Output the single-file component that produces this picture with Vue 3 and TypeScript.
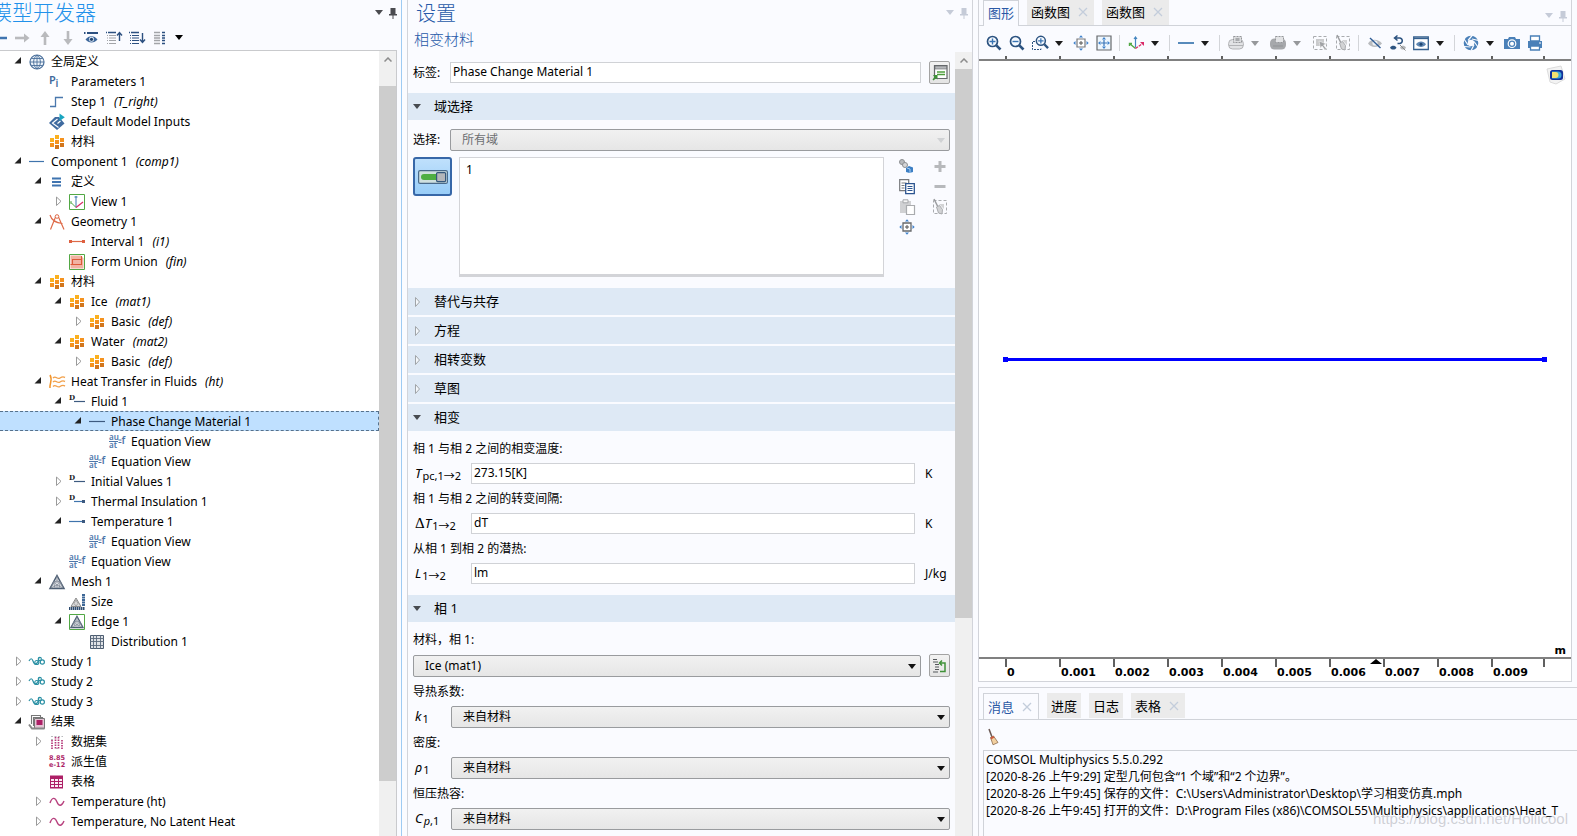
<script setup lang="ts">
import { ref } from 'vue'

interface TreeRow {
  depth: number
  icon: string
  label: string
  tag?: string
  state?: 'open' | 'closed'
}

const equation =
  '<g fill="#4c76aa" font-family="Noto Sans" font-size="8" font-weight="600"><text x="0" y="5.5">au</text><text x="0" y="14">at</text><text x="12.5" y="9.500" font-size="10">f</text></g><path d="M0 7.500h9M9.500 6h3M9.500 8.500h3" stroke="#4c76aa" fill="none"/>'
const meshTriangle =
  '<path d="M8 1.5 15 14.5H1z" fill="#dfe2e6" stroke="#4c5d72" stroke-width="1.500"/><path d="M8 2v5l-3.500 1L8 11l3.500-3L8 7M4.500 8 2 14l6-3 6 3-2.500-6M8 11v3M4.500 8l1.500 6M11.500 8 10 14M4.500 8h7" fill="none" stroke="#7d8794" stroke-width=".8"/>'
const lens = (sign: string) =>
  `<circle cx="6.500" cy="6.500" r="5" fill="#f6faff" stroke="#2c5380" stroke-width="1.700"/><path d="m10.300 10.300 4.200 4.200" stroke="#2c5380" stroke-width="2.600"/><path d="${sign}" stroke="#3873b3" stroke-width="1.400"/>`
const dLetter = '<text x="0" y="5.500" font-size="7" font-weight="700" font-family="DejaVu Serif" fill="#222">D</text>'
const dashedBox = '<path d="M1.500 1.500h13v13h-13z" fill="none" stroke="#a9abae" stroke-dasharray="3 2"/>'
const broomGray = '<path d="m2 0 4 8" stroke="#9c9ea1" stroke-width="1.600"/><path d="M7 5h5v5z" fill="#d2d3d5"/><path d="m4.500 8 3-1.500 3 4-.5 4.500-3.500-1z" fill="#d2d3d5" stroke="#a9abae"/>'

const icons: Record<string, string> = {
  globe: '<circle cx="8" cy="8" r="7" fill="#eef4fa" stroke="#4a6f9b" stroke-width="1.200"/><path d="M8 1v14M1 8h14M2.500 4.500h11M2.500 11.500h11M8 1C3.500 4 3.500 12 8 15M8 1c4.500 3 4.500 11 0 14" fill="none" stroke="#4a6f9b" stroke-width=".9"/>',
  pi: '<text x="0" y="9.500" font-size="11" font-weight="600" font-family="Noto Sans" fill="#3f6a9c">P</text><text x="6.500" y="12.500" font-size="10" font-weight="600" font-family="Noto Sans" fill="#3f6a9c">i</text>',
  step: '<path d="M1 12.500h5.500V3.500H14" fill="none" stroke="#4a78ad" stroke-width="1.300"/>',
  inputs: '<path d="m0 9 6-6h4l5.500 6.500L8 16z" fill="#3f6ba0"/><path d="M3 9.500 8.500 5M4 9.500l5.500 4M8.500 9.500l3-2.500" fill="none" stroke="#fff" stroke-width="1.100"/><path d="M10.500-.5v7.500L15.800 3.300z" fill="#19a5c0"/>',
  materials: '<path d="M1 4h4v4H1zM6 1h4v4H6z" fill="#fbb01f"/><path d="M11 4h4v4h-4zM6 6h4v4H6zM1 9h4v4H1z" fill="#f5921e"/><path d="M11 9h4v4h-4zM6 11h4v4H6z" fill="#d2761c"/>',
  line: '<path d="M0 7.500h15" stroke="#3f74ac" stroke-width="1.200"/>',
  lineDark: '<path d="M0 7.500h16" stroke="#3d5a80" stroke-width="1.200"/>',
  definitions: '<path d="M3 4.500h9M3 8h9M3 11.500h9" stroke="#3f74b0" stroke-width="1.800"/>',
  view: '<path d="M.5.5h15v15H.5z" fill="#fff" stroke="#52a845"/><path d="M7 13.500V2M5.500 3h3" fill="none" stroke="#3a76b0"/><path d="M7 13.500 2 8.500M2 7v3" fill="none" stroke="#52a845"/><path d="m7 13.500 7-5.500" fill="none" stroke="#da2a68" stroke-width="1.200"/>',
  geometry: '<path d="M1 1c1.500 5 6 8 12.500 8.500M1.500 15.500 6.500 3h3l5.500 12.500" fill="none" stroke="#de6a48" stroke-width="1.200"/><circle cx="8" cy="2.500" r="1.800" fill="#fff" stroke="#de6a48"/>',
  interval: '<path d="M2 7.500h12" stroke="#de6a48" stroke-width="1.200"/><path d="M0 6h3v3H0zM13 6h3v3h-3z" fill="#de6040"/>',
  union: '<path d="M.5.5h15v15H.5z" fill="#fff" stroke="#52a845"/><path d="M1.500 1.500H12l2.500 3V14.500h-13z" fill="#f1b3a2"/><path d="M3.500 10.500v-5h9M1.500 10.500h11V2" fill="none" stroke="#dc5a38" stroke-width="1.100"/>',
  heat: '<path d="M1 1c3 5-.5 8 0 13" fill="none" stroke="#f2952b" stroke-width="1.500"/><path d="M4 4c3-3 4 2 7 0s4-1 5-.5M4 8c3-3 4 2 7 0s4-1 5-.5M4 12.500c3-3 4 2 7 0s4-1 5-.5" fill="none" stroke="#f2a04a" stroke-width="1.400"/>',
  domain: dLetter + '<path d="M5 7.500h11" stroke="#3d5a80" stroke-width="1.200"/>',
  boundaryD: dLetter + '<path d="M5 7.500h9" stroke="#3f74ac" stroke-width="1.200"/><path d="M13 6h3v3h-3z" fill="#3d5a80"/>',
  boundary: '<path d="M0 7.500h14" stroke="#3f74ac" stroke-width="1.200"/><path d="M13 6h3v3h-3z" fill="#3d5a80"/>',
  equation,
  mesh: meshTriangle,
  size: '<path d="m7 4 5 8.500H2z" fill="#d8d8d8" stroke="#8b8b8b"/><path d="m7 6-2 3.500L7 12l2-2.500z" fill="none" stroke="#999" stroke-width=".8"/><path d="M14.500 0v12.500" stroke="#3d6796" stroke-width="3" stroke-dasharray="2 .5"/><path d="M0 14.500h16" stroke="#2f4d70" stroke-width="2.800" stroke-dasharray="1.500 .5"/>',
  edge: `<path d="M.5.5h15v15H.5z" fill="#fff" stroke="#52a845"/><g transform="translate(1 1) scale(.87)">${meshTriangle}</g>`,
  distribution: '<path d="M1.500 1.500h13v13h-13z" fill="#dfe2e6" stroke="#4b5c70"/><path d="M4.500 1v14M7.500 1v14M11.500 1v14M1 4.500h14M1 7.500h14M1 11.500h14" stroke="#5a6a7c" stroke-width=".9"/>',
  study: '<path d="M0 7c1.500-3 3-3 4 0s2 4 4 2 1-3 2-5" fill="none" stroke="#2a90a4" stroke-width="1.200"/><circle cx="7.800" cy="8.500" r="2" fill="none" stroke="#2a90a4" stroke-width="1.100"/><circle cx="10.800" cy="5" r="1.600" fill="none" stroke="#2a90a4" stroke-width="1.100"/><circle cx="13.300" cy="8" r="2.100" fill="none" stroke="#2a90a4" stroke-width="1.200"/>',
  results: '<path d="M2.500 10V1.500h9v2M4.500 12V3.500h9v1" fill="none" stroke="#777" stroke-width="1.100"/><path d="M5.500 4.500h10v10h-10z" fill="#e3c3d3" stroke="#777"/><path d="M7.500 6h6v5h-6z" fill="#ad1f66"/><path d="M0 10.500 3 14.500h12.500" fill="none" stroke="#888" stroke-width="2"/>',
  datasets: '<path d="M2 2.500h12M2 5.500h3M7 14.500h2" stroke="#b9b9bc" stroke-dasharray="2 1.500"/><path d="M3 6v9M6.500 3v12M9.500 3v12M13 6v9" stroke="#b5397a" stroke-width="1.700" stroke-dasharray="1.500 1"/>',
  derived: '<g font-family="DejaVu Sans" font-weight="700" font-size="6.500" fill="#ad1f66"><text x="0" y="6">8.85</text><text x="0" y="13">e-12</text></g>',
  table: '<path d="M1 1.500h13v13H1z" fill="#ad1f66"/><path d="M2 5h3v2H2zM6 5h3v2H6zM10 5h3v2h-3zM2 8h3v2H2zM10 8h3v2h-3zM6 8h3v2H6zM2 11h3v2H2zM6 11h3v2H6zM10 11h3v2h-3z" fill="#fbeef4"/>',
  plot: '<path d="M1 9C3 3 6 3 8 8s5 4 7-1" fill="none" stroke="#b8427f" stroke-width="1.400"/>',
  left: '<path d="M7 8h9" stroke="#3f74b0" stroke-width="2.500" fill="none"/>',
  right: '<path d="M1 8h10" stroke="#b9babd" stroke-width="2.600"/><path d="m10 3.500 5.500 4.500-5.500 4.500z" fill="#b9babd"/>',
  up: '<path d="M8 15V6" stroke="#b9babd" stroke-width="2.600"/><path d="m3.500 7 4.500-6 4.500 6z" fill="#b9babd"/>',
  down: '<path d="M8 1v9" stroke="#b9babd" stroke-width="2.600"/><path d="m3.500 9 4.500 6 4.500-6z" fill="#b9babd"/>',
  show: '<path d="M1 3h1.500M4 3h11" stroke="#2c5080" stroke-width="2"/><path d="M2.500 9.500c3-4.500 9-4.500 12 0-3 4-9 4-12 0z" fill="#3e689c"/><circle cx="8.500" cy="9.300" r="2.500" fill="#dfe9f5"/><circle cx="8.500" cy="9.300" r="1.600" fill="#23456f"/>',
  listUp: '<path d="M0 2.500h1M2 2.500h8" stroke="#2c5080" stroke-width="1.600"/><path d="M1 5.500h1M3 5.500h7M1 8h1M3 8h7M1 10.500h1M3 10.500h7M1 13.500h1M3 13.500h7" stroke="#a2a4a8" stroke-width="1.200"/><path d="M13.500 11V3M11 5.500l2.500-3 2.500 3" stroke="#2c5080" stroke-width="1.400" fill="none"/>',
  listDown: '<path d="M0 2.500h1M2 2.500h8" stroke="#2c5080" stroke-width="1.600"/><path d="M1 5.500h1M3 5.500h7M3 8h7M3 10.500h7M1 13.500h1M3 13.500h7M1 8h1M1 10.500h1" stroke="#2c5080" stroke-width="1.200"/><path d="M13.500 3v9M11 9.500l2.500 3 2.500-3" stroke="#2c5080" stroke-width="1.400" fill="none"/>',
  list: '<path d="M2 2.500h6M2 5.500h6M2 8h6M2 10.500h6M2 13.500h6" stroke="#a2a4a8" stroke-width="1.300"/><path d="M10 2.500h3M10 5.500h3M10 8h3M10 10.500h3M10 13.500h3" stroke="#2c5080" stroke-width="1.500"/>',
  pin: '<path d="M5.500 3h5v6h-5zM4 9h8v1.500H4zM7.500 10h1v4h-1z" fill="currentColor"/>',
  zoomIn: lens('M3.500 6.500h6M6.500 3.500v6'),
  zoomOut: lens('M3.500 6.500h6'),
  zoomBox: `<path d="M3 6.500H.5v8H9V13" fill="none" stroke="#2c5380" stroke-dasharray="2 1"/><g transform="translate(3 0) scale(.9)">${lens('M3.500 6.500h6M6.500 3.500v6')}</g>`,
  extents: '<path d="M4 4h8v8H4z" fill="#fff" stroke="#77797c" stroke-width="1.200"/><path d="M6 8h4M8 6v4" stroke="#555"/><path d="M6 2.500 8 .3l2 2.200zM6 13.500 8 15.700l2-2.200zM2.500 6 .3 8l2.200 2zM13.500 6l2.200 2-2.200 2z" fill="#3b7fca"/>',
  fit: '<path d="M1 1h14v14H1z" fill="#eef6fd" stroke="#66696d" stroke-width="1.200"/><path d="M5 8h6M8 5v6" stroke="#3b76b8" stroke-width="1.200"/><path d="M6 4.500 8 2l2 2.500zM6 11.500 8 14l2-2.500zM4.500 6 2 8l2.500 2zM11.500 6 14 8l-2.500 2z" fill="#3b7fca"/>',
  axes: '<path d="M7.500 12.500V2M6 4l1.500-2L9 4" fill="none" stroke="#4385bf" stroke-width="1.200"/><path d="m7.500 13.500-6-5M1.500 11V8.500H4" fill="none" stroke="#52a845" stroke-width="1.400"/><path d="m7.500 13.500 7-5" fill="none" stroke="#da2a68" stroke-width="1.300" stroke-dasharray="3 1"/><path d="M12 7h4v4z" fill="#da2a68"/>',
  blueLine: '<path d="M0 8h16" stroke="#115a9e" stroke-width="1.400"/>',
  scene: '<rect x=".6" y="4.500" width="14.800" height="9.500" rx="4" fill="#e2e3e5" stroke="#b3b4b7"/><path d="M1 10.500h14" stroke="#b3b4b7"/><path d="M5.500 1.500h8v6h-8z" fill="#dcdddf" stroke="#95979a" stroke-dasharray="2 1"/><path d="M7.500 3h4v3h-4z" fill="#a9abae"/>',
  sceneDark: '<rect x="0" y="3.500" width="16" height="11" rx="4.500" fill="#a6a8ab"/><path d="M5.500 1.500h8v6h-8z" fill="#e2e3e5" stroke="#95979a" stroke-dasharray="2 1"/><path d="M3 11h10" stroke="#919396"/>',
  select: dashedBox + '<path d="M4 4h8v7H4z" fill="#c9cacc"/><path d="m7 6 7.500 3-3 1 3 4-1.500 1-3-4-1.500 2.500z" fill="#a1a3a6" stroke="#fff" stroke-width=".5"/>',
  deselect: dashedBox + broomGray,
  hide: '<path d="M1 8.500c3-5 10-5 14 0-4 4.500-11 4.500-14 0z" fill="#b9bbbe"/><circle cx="8" cy="8" r="2.600" fill="#eef1f5"/><path d="m3 3 10.500 10" stroke="#2f5c95" stroke-width="1.400"/>',
  reset: '<path d="M5.500 3h4.500a2.800 2.800 0 0 1 0 5.500H7.500M7.500.500l-3 2.500 3 2.500" fill="none" stroke="#2c5380" stroke-width="1.500"/><path d="M0 12.700c1.500-2.500 5-2.500 6.500 0-1.500 2.500-5 2.500-6.500 0z" fill="#2c5380"/><path d="M10 12.700c1.500-2.500 4.500-2.500 6 0-1.500 2.500-4.500 2.500-6 0z" fill="#b5b7ba"/><path d="m10 10 5.500 5.500" stroke="#888"/>',
  visible: '<path d="M.7 2h14.600v12.500H.7z" fill="#fff" stroke="#36618f" stroke-width="1.300"/><path d="M1 3.500h14" stroke="#36618f" stroke-width="1.300"/><path d="M3 9.300c2.500-3.800 7.500-3.800 10 0-2.500 3.500-7.500 3.500-10 0z" fill="#5f87b2"/><circle cx="8" cy="9.200" r="1.500" fill="#1f4570"/>',
  shutter: '<circle cx="8" cy="8" r="5.300" fill="none" stroke="#4a80b8" stroke-width="4"/><path d="M9.500 0 5 5.500M15.500 5.500 9 4M15 12 11 6.500M8 15.800l3-6M1 11.500l6.500.5M1 4l4 6" stroke="#fafbff" stroke-width="1.200"/>',
  camera: '<path d="M0 4h4l1-2h6l1 2h4v10H0z" fill="#4a80b8"/><circle cx="8" cy="8.700" r="3.800" fill="none" stroke="#fff" stroke-width="1.200"/><circle cx="8" cy="8.700" r="2" fill="#fff"/>',
  print: '<path d="M3.500 1h9v5h-9z" fill="#fff" stroke="#4a80b8" stroke-width="1.300"/><path d="M1 6h14v7H1z" fill="#4a80b8"/><path d="M3.500 11h9v4h-9z" fill="#fff" stroke="#4a80b8" stroke-width="1.300"/><path d="M12 8h2" stroke="#fff"/>',
  goto: '<path d="M2.500.500h12.500v13H2.500z" fill="#fff" stroke="#66686b" stroke-width="1.200"/><path d="M3 1h11.500v3H3z" fill="#b5b7ba" stroke="#66686b" stroke-width=".6"/><path d="M5 7h8M5 9.500h8" stroke="#4f9e3c" stroke-width="1.300"/><path d="M1 10h4.500v4.500L4 13.200 1.500 15.500.5 14.500 2.500 12z" fill="#3f9138"/>',
  toggle: '<rect x=".6" y=".6" width="28.800" height="12.800" rx="1.500" fill="#cfe0df" stroke="#4a6a8a" stroke-width="1.200"/><path d="M6 4h12v6H6a3 3 0 0 1 0-6z" fill="#4fae43"/><rect x="18.600" y="2.600" width="9" height="9" rx="1" fill="#b4b6b9" stroke="#36597d" stroke-width="1.200"/>',
  createSel: '<circle cx="3" cy="3" r="2.500" fill="#b8babd" stroke="#8d8f92"/><circle cx="6" cy="6" r="2.500" fill="#d5d6d8" stroke="#8d8f92"/><path d="m7 9 3-2 4 1.500v4.500L10.500 14 7 13z" fill="#3c7fc4"/><path d="m8 9 3 1v4" stroke="#a8cdf0" fill="none"/>',
  copy: '<path d="M.7.700h9v11h-9z" fill="#fff" stroke="#77797c" stroke-width="1.200"/><path d="M2.500 4h5M2.500 6.500h3M2.500 9h3" stroke="#77797c"/><path d="M6.700 4.700h8.600v10H6.700z" fill="#fff" stroke="#2c5591" stroke-width="1.300"/><path d="M8.500 7.500h5M8.500 9.500h5M8.500 11.500h5" stroke="#2c5591"/>',
  paste: '<path d="M1 2h11v12H1z" fill="#d0d1d3"/><path d="M4 .8h5v3H4z" fill="#f5f5f5" stroke="#a6a8ab"/><path d="M7.500 6.500h8v9h-8z" fill="#fff" stroke="#a9abae" stroke-width="1.200"/>',
  center: '<path d="M4 4h8v8H4z" fill="#fff" stroke="#66686b" stroke-width="1.300"/><path d="M6 8h4M8 6v4" stroke="#555"/><path d="M6 2.500 8 .3l2 2.200zM6 13.500 8 15.700l2-2.200zM2.500 6 .3 8l2.200 2zM13.500 6l2.200 2-2.200 2z" fill="#3b7fca"/>',
  plus: '<path d="M2.500 7.500h11M8 2v11" stroke="#b7b9bc" stroke-width="3"/>',
  minus: '<path d="M2.500 7.500h11" stroke="#b7b9bc" stroke-width="3"/>',
  gotoMat: '<path d="M1 1.500h4M1 4h5M3 6.500h4M3 9h4M3 11.500h4M1 14h5" stroke="#55585c" stroke-width="1.200"/><path d="M8 13.500h5V5H7.500M10 2.500 7.500 5l2.500 2.500" fill="none" stroke="#3f9138" stroke-width="1.500"/>',
  broom: '<path d="m3 0 3 8" stroke="#6b5a55" stroke-width="1.500"/><path d="m4.500 8.500 3-1.500 4.500 6.500-5 2.300z" fill="#f2d0a0" stroke="#8a6a4c" stroke-width=".8"/><path d="m4.500 8.500 3-1.500 1 1.500-3.500 2z" fill="#cd5a3e"/>',
}

const tree: TreeRow[] = [
  { depth: 0, icon: 'globe', label: '全局定义', state: 'open' },
  { depth: 1, icon: 'pi', label: 'Parameters 1' },
  { depth: 1, icon: 'step', label: 'Step 1', tag: '(T_right)' },
  { depth: 1, icon: 'inputs', label: 'Default Model Inputs' },
  { depth: 1, icon: 'materials', label: '材料' },
  { depth: 0, icon: 'line', label: 'Component 1', tag: '(comp1)', state: 'open' },
  { depth: 1, icon: 'definitions', label: '定义', state: 'open' },
  { depth: 2, icon: 'view', label: 'View 1', state: 'closed' },
  { depth: 1, icon: 'geometry', label: 'Geometry 1', state: 'open' },
  { depth: 2, icon: 'interval', label: 'Interval 1', tag: '(i1)' },
  { depth: 2, icon: 'union', label: 'Form Union', tag: '(fin)' },
  { depth: 1, icon: 'materials', label: '材料', state: 'open' },
  { depth: 2, icon: 'materials', label: 'Ice', tag: '(mat1)', state: 'open' },
  { depth: 3, icon: 'materials', label: 'Basic', tag: '(def)', state: 'closed' },
  { depth: 2, icon: 'materials', label: 'Water', tag: '(mat2)', state: 'open' },
  { depth: 3, icon: 'materials', label: 'Basic', tag: '(def)', state: 'closed' },
  { depth: 1, icon: 'heat', label: 'Heat Transfer in Fluids', tag: '(ht)', state: 'open' },
  { depth: 2, icon: 'domain', label: 'Fluid 1', state: 'open' },
  { depth: 3, icon: 'lineDark', label: 'Phase Change Material 1', state: 'open' },
  { depth: 4, icon: 'equation', label: 'Equation View' },
  { depth: 3, icon: 'equation', label: 'Equation View' },
  { depth: 2, icon: 'domain', label: 'Initial Values 1', state: 'closed' },
  { depth: 2, icon: 'boundaryD', label: 'Thermal Insulation 1', state: 'closed' },
  { depth: 2, icon: 'boundary', label: 'Temperature 1', state: 'open' },
  { depth: 3, icon: 'equation', label: 'Equation View' },
  { depth: 2, icon: 'equation', label: 'Equation View' },
  { depth: 1, icon: 'mesh', label: 'Mesh 1', state: 'open' },
  { depth: 2, icon: 'size', label: 'Size' },
  { depth: 2, icon: 'edge', label: 'Edge 1', state: 'open' },
  { depth: 3, icon: 'distribution', label: 'Distribution 1' },
  { depth: 0, icon: 'study', label: 'Study 1', state: 'closed' },
  { depth: 0, icon: 'study', label: 'Study 2', state: 'closed' },
  { depth: 0, icon: 'study', label: 'Study 3', state: 'closed' },
  { depth: 0, icon: 'results', label: '结果', state: 'open' },
  { depth: 1, icon: 'datasets', label: '数据集', state: 'closed' },
  { depth: 1, icon: 'derived', label: '派生值' },
  { depth: 1, icon: 'table', label: '表格' },
  { depth: 1, icon: 'plot', label: 'Temperature (ht)', state: 'closed' },
  { depth: 1, icon: 'plot', label: 'Temperature, No Latent Heat', state: 'closed' },
]
const selected = ref(18)

const treeTools = ['left', 'right', 'up', 'down', 'show', 'listUp', 'listDown', 'list']
const graphicsTools = [
  'zoomIn', 'zoomOut', 'zoomBox', 'caret', 'extents', 'fit', 'sep', 'axes', 'caret', 'sep',
  'blueLine', 'caret', 'sep', 'scene', 'caret-off', 'sceneDark', 'caret-off', 'select', 'deselect', 'sep',
  'hide', 'reset', 'visible', 'caret', 'sep', 'shutter', 'caret', 'camera', 'print',
]
const listTools = ['createSel', 'plus', 'copy', 'minus', 'paste', 'deselect', 'center']

const collapsed = ['替代与共存', '方程', '相转变数', '草图']
const phaseFields = ref([
  { id: 'tpc', label: '相 1 与相 2 之间的相变温度:', prefix: '', symbol: 'T', sub: 'pc,1→2', value: '273.15[K]', unit: 'K' },
  { id: 'dt', label: '相 1 与相 2 之间的转变间隔:', prefix: 'Δ', symbol: 'T', sub: '1→2', value: 'dT', unit: 'K' },
  { id: 'lat', label: '从相 1 到相 2 的潜热:', prefix: '', symbol: 'L', sub: '1→2', value: 'lm', unit: 'J/kg' },
])
const materialFields = [
  { id: 'k', label: '导热系数:', symbol: 'k', subItalic: '', sub: '1' },
  { id: 'rho', label: '密度:', symbol: 'ρ', subItalic: '', sub: '1' },
  { id: 'cp', label: '恒压热容:', symbol: 'C', subItalic: 'p', sub: ',1' },
]
const nodeLabel = ref('Phase Change Material 1')
const domains = ref('1')

const ticks = ['0', '0.001', '0.002', '0.003', '0.004', '0.005', '0.006', '0.007', '0.008', '0.009']
const messages = [
  'COMSOL Multiphysics 5.5.0.292',
  '[2020-8-26 上午9:29] 定型几何包含“1 个域”和“2 个边界”。',
  '[2020-8-26 上午9:45] 保存的文件：C:\\Users\\Administrator\\Desktop\\学习相变仿真.mph',
  '[2020-8-26 上午9:45] 打开的文件：D:\\Program Files (x86)\\COMSOL55\\Multiphysics\\applications\\Heat_T',
]
</script>

<template>
  <main class="workspace">
    <section class="panel builder">
      <header class="builder-head">
        <h1 class="builder-title">模型开发器</h1>
        <div class="window-tools">
          <button class="plain" aria-label="菜单"><i class="caret"></i></button>
          <button class="plain" aria-label="固定"><svg viewBox="0 0 16 16" class="icon" v-html="icons.pin"></svg></button>
        </div>
      </header>
      <div class="tree-tools">
        <button v-for="t in treeTools" :key="t" class="plain tree-tool" :aria-label="t">
          <svg viewBox="0 0 16 16" class="icon" v-html="icons[t]"></svg>
        </button>
        <button class="plain" aria-label="更多"><i class="caret"></i></button>
      </div>
      <div class="tree-frame">
        <ul class="tree">
          <li
            v-for="(row, i) in tree"
            :key="i"
            class="tree-row"
            :class="{ selected: i === selected }"
            :style="{ paddingLeft: 10 + row.depth * 20 + 'px' }"
            @click="selected = i"
          >
            <button v-if="row.state" class="plain twist" :aria-label="row.state">
              <svg viewBox="0 0 16 20" class="twist-icon">
                <path v-if="row.state === 'open'" d="M11 5v6.500H4.500z" fill="#222" />
                <path v-else d="M6.500 5v8.500l4.500-4.200z" fill="#fff" stroke="#9a9a9a" />
              </svg>
            </button>
            <span v-else class="twist"></span>
            <svg viewBox="0 0 16 16" class="icon" v-html="icons[row.icon]"></svg>
            <span class="tree-label">{{ row.label }}</span>
            <em v-if="row.tag" class="tree-tag">{{ row.tag }}</em>
          </li>
        </ul>
        <div class="scrollbar">
          <span class="scroll-cap tall"><svg viewBox="0 0 8 5" class="chevron"><path d="m.5 4.500 3.500-3.500 3.500 3.500" /></svg></span>
          <span class="scroll-thumb tree-thumb"></span>
        </div>
      </div>
    </section>

    <section class="panel settings">
      <header class="settings-head">
        <div>
          <h2 class="settings-title">设置</h2>
          <p class="settings-sub">相变材料</p>
        </div>
        <div class="window-tools faded">
          <button class="plain" aria-label="菜单"><i class="caret"></i></button>
          <button class="plain" aria-label="固定"><svg viewBox="0 0 16 16" class="icon" v-html="icons.pin"></svg></button>
        </div>
      </header>
      <div class="settings-scroll">
        <form class="form" @submit.prevent>
          <div class="row name-row">
            <label for="name" class="side-label">标签:</label>
            <input id="name" v-model="nodeLabel" class="text grow" />
            <button type="button" class="raised" aria-label="转到"><svg viewBox="0 0 16 16" class="icon" v-html="icons.goto"></svg></button>
          </div>

          <button type="button" class="section-head"><i class="caret dim"></i>域选择</button>
          <div class="domain-body">
            <div class="row">
              <label for="sel" class="side-label">选择:</label>
              <span class="select-wrap grow off"><select id="sel" disabled><option>所有域</option></select></span>
            </div>
            <div class="domain-row">
              <button type="button" class="toggle" aria-label="激活"><svg viewBox="0 0 30 14" class="toggle-icon" v-html="icons.toggle"></svg></button>
              <textarea v-model="domains" class="domain-list" aria-label="域"></textarea>
              <div class="list-tools">
                <button v-for="t in listTools" :key="t" type="button" class="plain" :aria-label="t">
                  <svg viewBox="0 0 16 16" class="icon" v-html="icons[t]"></svg>
                </button>
              </div>
            </div>
          </div>

          <button v-for="c in collapsed" :key="c" type="button" class="section-head stacked">
            <svg viewBox="0 0 10 12" class="closed-arrow"><path d="M2.500 2.500v9l4-4.500z" /></svg>{{ c }}
          </button>
          <button type="button" class="section-head"><i class="caret dim"></i>相变</button>
          <div class="section-body">
            <template v-for="f in phaseFields" :key="f.id">
              <label :for="f.id" class="field-label">{{ f.label }}</label>
              <div class="row">
                <span class="symbol"><span v-if="f.prefix" class="delta">{{ f.prefix }}</span><i>{{ f.symbol }}</i><sub>{{ f.sub }}</sub></span>
                <input :id="f.id" v-model="f.value" class="text grow" />
                <span class="unit">{{ f.unit }}</span>
              </div>
            </template>
          </div>

          <button type="button" class="section-head"><i class="caret dim"></i>相 1</button>
          <div class="section-body">
            <label for="mat" class="field-label">材料，相 1:</label>
            <div class="row">
              <span class="select-wrap grow"><select id="mat"><option>Ice (mat1)</option></select></span>
              <button type="button" class="raised" aria-label="转到材料"><svg viewBox="0 0 16 16" class="icon" v-html="icons.gotoMat"></svg></button>
            </div>
            <template v-for="f in materialFields" :key="f.id">
              <label :for="f.id" class="field-label">{{ f.label }}</label>
              <div class="row">
                <span class="symbol narrow"><i>{{ f.symbol }}</i><sub><i>{{ f.subItalic }}</i>{{ f.sub }}</sub></span>
                <span class="select-wrap grow"><select :id="f.id"><option>来自材料</option></select></span>
              </div>
            </template>
          </div>
        </form>
        <div class="scrollbar">
          <span class="scroll-cap"><svg viewBox="0 0 8 5" class="chevron"><path d="m.5 4.500 3.500-3.500 3.500 3.500" /></svg></span>
          <span class="scroll-thumb settings-thumb"></span>
        </div>
      </div>
    </section>

    <div class="right">
      <section class="panel graphics">
        <nav class="tabs graph-tabs">
          <button class="tab active">图形</button>
          <button class="tab">函数图<svg viewBox="0 0 10 10" class="close"><path d="m1 1 8 8M9 1 1 9" /></svg></button>
          <button class="tab">函数图<svg viewBox="0 0 10 10" class="close"><path d="m1 1 8 8M9 1 1 9" /></svg></button>
          <div class="window-tools faded push">
            <button class="plain" aria-label="菜单"><i class="caret"></i></button>
            <button class="plain" aria-label="固定"><svg viewBox="0 0 16 16" class="icon" v-html="icons.pin"></svg></button>
          </div>
        </nav>
        <div class="graph-tools">
          <template v-for="(t, i) in graphicsTools" :key="i">
            <span v-if="t === 'sep'" class="sep"></span>
            <button v-else-if="t.startsWith('caret')" class="plain tool-caret" :class="{ muted: t === 'caret-off' }" aria-label="选项"><i class="caret"></i></button>
            <button v-else class="plain tool" :aria-label="t"><svg viewBox="0 0 16 16" class="icon" v-html="icons[t]"></svg></button>
          </template>
        </div>
        <div class="ruler top"><span v-for="t in ticks" :key="t" class="tick"></span></div>
        <div class="plot">
          <svg viewBox="0 0 20 20" class="brand">
            <path d="m1 4 14-3 4 13-9 5-6-2z" fill="#f3f3f3" stroke="#dcdcdc" />
            <rect x="4" y="5" width="13" height="10" rx="2.500" fill="#12309a" />
            <path d="M6 6.500h6a3.500 3.500 0 0 1 0 7H6z" fill="#3fa8d8" />
            <path d="M6 7h3.500a3 3 0 0 1 0 6H6z" fill="#f5e070" />
          </svg>
          <div class="segment"></div>
          <span class="axis-unit">m</span>
        </div>
        <div class="ruler bottom">
          <span v-for="t in ticks" :key="t" class="tick"><span class="tick-label">{{ t }}</span></span>
          <i class="marker"></i>
        </div>
      </section>

      <section class="panel messages">
        <nav class="tabs message-tabs">
          <button class="tab active">消息<svg viewBox="0 0 10 10" class="close"><path d="m1 1 8 8M9 1 1 9" /></svg></button>
          <button class="tab">进度</button>
          <button class="tab">日志</button>
          <button class="tab">表格<svg viewBox="0 0 10 10" class="close"><path d="m1 1 8 8M9 1 1 9" /></svg></button>
        </nav>
        <div class="message-tools">
          <button class="plain" aria-label="清除"><svg viewBox="0 0 16 16" class="icon" v-html="icons.broom"></svg></button>
        </div>
        <div class="log">
          <p v-for="m in messages" :key="m" class="log-line">{{ m }}</p>
          <span class="watermark">https://blog.csdn.net/Hollicool</span>
        </div>
      </section>
    </div>
  </main>
</template>

<style>
body {
  margin: 0;
  background: #fafbff;
}
</style>

<style scoped>
.workspace {
  display: grid;
  grid-template-columns: 402fr 566fr 599fr;
  gap: 5px;
  height: 100vh;
  overflow: hidden;
  background: #fafbff;
  color: #000;
  font: 12px/20px 'Noto Sans', 'Noto Sans CJK SC', sans-serif;
}
.workspace * {
  box-sizing: border-box;
}
button,
input,
select,
textarea {
  margin: 0;
  font: inherit;
  color: inherit;
}
.plain {
  display: inline-flex;
  align-items: center;
  justify-content: center;
  padding: 0;
  border: 0;
  background: none;
}
.icon {
  display: block;
  flex: none;
  width: 16px;
  height: 16px;
  overflow: visible;
}
.caret {
  flex: none;
  width: 0;
  height: 0;
  border: 4px solid transparent;
  border-top: 5px solid currentColor;
  border-bottom: 0;
}
.panel {
  display: flex;
  flex-direction: column;
  min-width: 0;
  min-height: 0;
}
.window-tools {
  display: flex;
  align-items: center;
  gap: 2px;
  color: #4a4b50;
}
.window-tools.faded {
  color: #c5cbd8;
}

/* model tree */
.builder {
  border-right: 1px solid #9ecbf3;
}
.builder-head {
  display: flex;
  justify-content: space-between;
  align-items: center;
  height: 25px;
}
.builder-title {
  margin: 0 0 0 -9px;
  font-size: 21px;
  line-height: 25px;
  font-weight: 300;
  color: #2191ea;
  white-space: nowrap;
}
.tree-tools {
  display: flex;
  align-items: center;
  height: 25px;
  margin-left: -9px;
}
.tree-tool {
  width: 16px;
  margin-right: 7px;
}
.tree-frame {
  flex: 1;
  display: flex;
  min-height: 0;
  margin-right: 4px;
  border-top: 1px solid #c9cacd;
  border-right: 1px solid #c9cacd;
  background: #fff;
}
.tree {
  flex: 1;
  min-width: 0;
  margin: 0;
  padding: 0;
  list-style: none;
  overflow: hidden;
}
.tree-row {
  display: flex;
  align-items: center;
  height: 20px;
  padding-top: 2px;
  border: 1px solid transparent;
  border-left: 0;
  white-space: nowrap;
}
.tree-row.selected {
  background: #bfe0ff;
  border: 1px dashed #56718c;
  border-left: 0;
}
.twist {
  flex: none;
  width: 16px;
  height: 16px;
  margin-right: 3px;
}
.twist-icon {
  flex: none;
  width: 16px;
  height: 20px;
}
.tree-label {
  margin-left: 6px;
}
.tree-tag {
  margin-left: 8px;
}
.scrollbar {
  flex: none;
  display: flex;
  flex-direction: column;
  width: 17px;
  background: #f0f0f0;
}
.scroll-cap {
  display: flex;
  justify-content: center;
  padding-top: 6px;
  height: 17px;
}
.scroll-cap.tall {
  height: 35px;
}
.chevron {
  width: 8px;
  height: 5px;
  fill: none;
  stroke: #8c8c8c;
  stroke-width: 1.5;
}
.scroll-thumb {
  background: #cdcdcd;
}
.tree-thumb {
  flex: 0 1 88.5%;
}
.settings-thumb {
  flex: 0 1 70%;
}

/* settings */
.settings {
  border-left: 1px solid #d2d4da;
  border-right: 1px solid #d2d4da;
}
.settings-head {
  display: flex;
  justify-content: space-between;
  height: 52px;
  padding-left: 6px;
}
.settings-head .window-tools {
  height: 25px;
}
.settings-title {
  margin: 0 0 0 2px;
  font-size: 20px;
  line-height: 28px;
  font-weight: 300;
  color: #2659a8;
}
.settings-sub {
  margin: 0;
  font-size: 15px;
  line-height: 22px;
  font-weight: 300;
  color: #2659a8;
}
.settings-scroll {
  flex: 1;
  display: flex;
  min-height: 0;
}
.form {
  flex: 1;
  min-width: 0;
  overflow: hidden;
}
.row {
  display: flex;
  align-items: center;
  min-height: 21px;
}
.grow {
  flex: 1;
  min-width: 0;
}
.name-row {
  padding: 9px 5px;
}
.side-label {
  flex: none;
  width: 37px;
}
.text {
  height: 21px;
  padding: 0 2px 2px;
  border: 1px solid #d0d2d6;
  background: #fff;
}
.raised {
  display: flex;
  align-items: center;
  justify-content: center;
  width: 21px;
  height: 23px;
  margin-left: 8px;
  padding: 0;
  border: 1px solid #a3a3a3;
  border-radius: 2px;
  background: linear-gradient(#f2f2f2, #e4e4e4);
}
.section-head {
  display: flex;
  align-items: center;
  width: 100%;
  height: 27px;
  padding: 0 5px 2px;
  border: 0;
  background: #dee9f5;
  font-size: 13px;
  text-align: left;
}
.section-head.stacked {
  margin-bottom: 2px;
}
.section-head .caret {
  margin: 2px 13px 0 0;
}
.caret.dim {
  color: #474b50;
}
.closed-arrow {
  width: 10px;
  height: 12px;
  margin-right: 11px;
  fill: #f4f8fc;
  stroke: #a0a4a8;
}
.domain-body {
  padding: 9px 5px 11px;
}
.select-wrap {
  position: relative;
  display: flex;
}
.select-wrap::after {
  content: '';
  position: absolute;
  right: 5px;
  top: 9px;
  border: 4px solid transparent;
  border-top: 5px solid #111;
  border-bottom: 0;
  pointer-events: none;
}
.select-wrap.off::after {
  border-top-color: #d0d2d4;
}
select {
  appearance: none;
  width: 100%;
  height: 22px;
  padding: 0 20px 0 11px;
  border: 1px solid #999b9e;
  border-radius: 2px;
  background: linear-gradient(#f1f1f1, #e6e6e6);
}
select:disabled {
  opacity: 1;
  color: #6d6f72;
}
.domain-row {
  display: flex;
  align-items: flex-start;
  margin-top: 6px;
}
.toggle {
  display: flex;
  align-items: center;
  justify-content: center;
  width: 39px;
  height: 39px;
  padding: 0;
  border: 2px solid #3767a8;
  border-radius: 3px;
  background: linear-gradient(#bfe0fc, #98cdf8);
}
.toggle-icon {
  flex: none;
  width: 30px;
  height: 14px;
}
.domain-list {
  flex: 1;
  min-width: 0;
  height: 120px;
  margin-left: 7px;
  padding: 2px 6px;
  resize: none;
  border: 1px solid #d3d4d8;
  border-bottom-width: 3px;
  background: #fff;
  outline: 0;
}
.list-tools {
  display: grid;
  grid-template-columns: 16px 16px;
  grid-auto-rows: 20px;
  column-gap: 17px;
  margin: 0 2px 0 15px;
}
.section-body {
  padding: 3px 5px 11px;
}
.field-label {
  display: block;
  line-height: 29px;
}
.symbol {
  flex: none;
  width: 58px;
  padding: 0 0 2px 2px;
  font-size: 13px;
  line-height: 18px;
  white-space: nowrap;
}
.symbol.narrow {
  width: 38px;
}
.symbol sub {
  margin-left: 1px;
  font-size: 11px;
  line-height: 0;
  vertical-align: -2px;
}
.delta {
  font-family: 'Liberation Serif', serif;
  font-size: 15px;
}
.unit {
  flex: none;
  width: 35px;
  padding-left: 10px;
}

/* graphics */
.right {
  display: flex;
  flex-direction: column;
  gap: 5px;
  min-width: 0;
  min-height: 0;
}
.graphics {
  flex: 683;
  margin-right: 5px;
  border: 1px solid #d2d4da;
  border-top: 0;
}
.tabs {
  display: flex;
  gap: 8px;
  padding-left: 4px;
  border-bottom: 1px solid #d0d3d9;
}
.graph-tabs {
  height: 26px;
}
.tab {
  display: flex;
  align-items: center;
  height: 25px;
  padding: 0 4px;
  border: 0;
  background: #ebebeb;
  font-size: 13px;
}
.tab.active {
  height: 26px;
  border: 1px solid #d0d3d9;
  border-bottom: 0;
  background: #fafbff;
  color: #2b59a6;
}
.graph-tabs .tab {
  padding-bottom: 2px;
}
.close {
  width: 10px;
  height: 10px;
  margin: 0 2px 0 8px;
  fill: none;
  stroke: #c3cddb;
  stroke-width: 1.3;
}
.push {
  margin-left: auto;
  padding-top: 6px;
}
.graph-tools {
  display: flex;
  align-items: center;
  height: 30px;
  padding: 4px 0 0 3px;
}
.tool {
  flex: none;
  width: 23px;
}
.tool-caret {
  flex: none;
  width: 16px;
  margin-right: 2px;
  color: #1c1c1c;
}
.tool-caret.muted {
  margin-right: 3px;
  color: #96989b;
}
.sep {
  flex: none;
  width: 9px;
  height: 16px;
  background: linear-gradient(#d3d5d9, #d3d5d9) center / 1px 100% no-repeat;
}
.ruler {
  position: relative;
  display: grid;
  grid-template-columns: repeat(10, 1fr);
  padding: 0 26px;
}
.ruler.top {
  height: 5px;
  border-bottom: 2px solid #808080;
}
.ruler.bottom {
  height: 24px;
  border-top: 2px solid #808080;
  background: #fff;
}
.tick {
  min-width: 0;
  height: 8px;
  border-left: 2px solid #606060;
}
.tick:nth-child(10) {
  border-right: 2px solid #606060;
}
.top .tick {
  height: 3px;
}
.tick-label {
  display: block;
  padding-top: 7px;
  font: bold 11px/14px 'DejaVu Sans', sans-serif;
}
.marker {
  position: absolute;
  left: 66%;
  top: 0;
  border: 6px solid transparent;
  border-bottom: 5px solid #000;
  border-top: 0;
}
.plot {
  flex: 1;
  display: flex;
  flex-direction: column;
  justify-content: space-between;
  background: #fff;
}
.brand {
  align-self: flex-end;
  width: 20px;
  height: 20px;
  margin: 4px 5px 0 0;
}
.segment {
  display: flex;
  align-items: center;
  justify-content: space-between;
  height: 5px;
  margin: 0 24px;
  background: linear-gradient(#00f, #00f) center / 100% 3px no-repeat;
}
.segment::before,
.segment::after {
  content: '';
  width: 5px;
  height: 5px;
  background: #00f;
}
.axis-unit {
  align-self: flex-end;
  height: 23px;
  margin-right: 5px;
  padding-top: 10px;
  font: bold 11px/13px 'DejaVu Sans', sans-serif;
}

/* messages */
.messages {
  flex: 148;
  border-top: 1px solid #d2d4da;
  border-left: 1px solid #d2d4da;
}
.message-tabs {
  height: 32px;
  padding-top: 5px;
}
.message-tools {
  height: 30px;
  padding: 9px 0 0 7px;
}
.log {
  position: relative;
  flex: 1;
  min-height: 0;
  margin-left: 4px;
  padding-left: 2px;
  border-top: 1px solid #d0d3d9;
  border-left: 1px solid #d0d3d9;
  overflow: hidden;
}
.log-line {
  margin: 0;
  line-height: 17px;
  white-space: nowrap;
}
.watermark {
  position: absolute;
  right: 9px;
  bottom: 7px;
  font: 15px/20px 'Liberation Sans', sans-serif;
  color: rgba(140, 140, 150, 0.4);
  pointer-events: none;
}
</style>
